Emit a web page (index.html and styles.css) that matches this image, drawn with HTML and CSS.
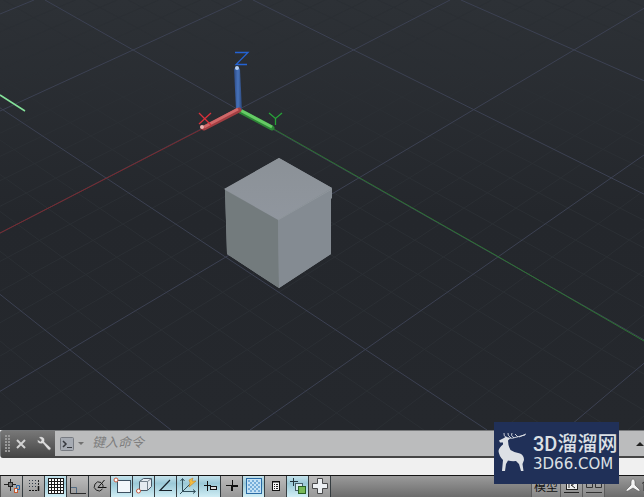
FILE: index.html
```html
<!DOCTYPE html>
<html lang="zh-CN">
<head>
<meta charset="utf-8">
<title>CAD</title>
<link rel="stylesheet" href="styles.css">
</head>
<body>
<div class="app">
  <main class="viewport">
    <svg class="scene" viewBox="0 0 644 430" preserveAspectRatio="xMinYMin slice" aria-hidden="true">
      <defs>
        <linearGradient id="bg" x1="0" y1="0" x2="0" y2="1"><stop offset="0" stop-color="#2d3136"/><stop offset=".5" stop-color="#24272c"/><stop offset="1" stop-color="#25282d"/></linearGradient>
        <linearGradient id="top" x1="0" y1="0" x2="0" y2="1"><stop offset="0" stop-color="#8b9197"/><stop offset="1" stop-color="#90969e"/></linearGradient>
        <linearGradient id="bluebar"><stop offset="0" stop-color="#2c4a86"/><stop offset=".5" stop-color="#4773bb"/><stop offset="1" stop-color="#2b4678"/></linearGradient>
      </defs>
      <rect width="644" height="430" fill="url(#bg)"/>
      <g id="grid"></g>
      <path d="M0 233L204 128" stroke="#7c292e" fill="none"/>
      <path d="M272 128L497 256L644 341" stroke="#2d7433" fill="none"/>
      <path d="M0 95L25 111" stroke="#85e29a" stroke-width="1.500" fill="none"/>
      <path d="M279 158L332 188L331 197V254L279 288L227 254L225 189Z" fill="#848b91"/>
      <path d="M224 189L279 158L332 188L278 220Z" fill="url(#top)"/>
      <path d="M225 190L278 220L279 288L227 254Z" fill="#737b7d"/>
      <path d="M278 220L332 189V198L331 199V254L279 288Z" fill="#848b92"/>
      <path d="M278 220L332 189" stroke="#8f969c" fill="none"/>
      <path d="M240 111L272 128" stroke="#2d8636" stroke-width="5" stroke-linecap="round"/>
      <path d="M240 110L272 127" stroke="#66cb65" stroke-width="3"/>
      <path d="M234 69q3-4 6 0L242 110H236Z" fill="url(#bluebar)"/>
      <circle cx="237" cy="68" r="2" fill="#b7d1f4"/>
      <path d="M239 110L204 128" stroke="#a23e42" stroke-width="5" stroke-linecap="round"/>
      <path d="M238 109L204 127" stroke="#cf6768" stroke-width="3"/>
      <circle cx="202" cy="127" r="2" fill="#efb4b2"/>
      <g fill="none">
        <path d="M199 113L211 125M211 113L199 124" stroke="#d8303a" stroke-width="1.300"/>
        <path d="M235 52.500H248L236 64.500H247" stroke="#2463d4" stroke-width="1.300"/>
        <path d="M269 113L275.500 118.500L282 113M275.500 118V125" stroke="#27a338" stroke-width="1.300"/>
      </g>
    </svg>
  </main>

  <form class="command">
    <div class="command-tools">
      <svg class="grip" viewBox="0 0 6 18" aria-hidden="true"><path d="M1 0V18M4 0V18" stroke="#999" stroke-width="2" stroke-dasharray="2 1"/></svg>
      <button class="tool" type="button" aria-label="关闭"><svg viewBox="0 0 14 16"><path d="M2 4L10 12M10 4L2 12" stroke="#d2d2d2" stroke-width="2"/></svg></button>
      <button class="tool wrench" type="button" aria-label="自定义"><svg viewBox="0 0 16 16"><path d="M1.500 1L4.500 4L3.500 5.500L.5 3.500Q-.5 6.500 2.500 7.500Q4.500 8 6 7.500L10.500 13Q12 15 13.500 13.500Q14.500 12.500 13 11L7.500 6Q8.500 1 4 .5Z" fill="#ddd" stroke="#555" stroke-width=".5"/></svg></button>
    </div>
    <button class="prompt" type="button" aria-label="最近使用的命令">
      <svg viewBox="0 0 26 16"><rect x="1.500" y="1.500" width="13" height="13" rx="1" fill="#a6abb3" stroke="#777b82"/><path d="M4 5L7 8L4 11" fill="none" stroke="#36393e" stroke-width="1.500"/><path d="M8 11.500H13" stroke="#36393e"/><path d="M19 6H25L22 9Z" fill="#707070"/></svg>
    </button>
    <input class="command-input" type="text" placeholder="键入命令" aria-label="命令">
    <button class="history" type="button" aria-label="历史记录"><svg viewBox="0 0 8 6"><path d="M0 5L4 1L8 5Z" fill="#222"/></svg></button>
  </form>
  <div class="gap"></div>

  <footer class="status">
    <div class="toggles">
      <button class="toggle" type="button" aria-label="推断约束"><svg viewBox="0 0 22 21"><path d="M3 8.500H15M9.500 3V15" stroke="#222"/><rect x="7.500" y="6.500" width="4" height="4" fill="#777" stroke="#222"/><rect x="13.500" y="12.500" width="3" height="4" fill="#eee" stroke="#c75b31"/><path d="M15.500 12V9.500H18.500V13.500H16" fill="none" stroke="#2463a8"/></svg></button>
      <button class="toggle" type="button" aria-label="捕捉模式"><svg viewBox="0 0 22 21"><path d="M6.500 4V13M9.500 4V13M12.500 4V13" stroke="#303a48" stroke-dasharray="1 2"/><path d="M15.500 4V11" stroke="#222" stroke-dasharray="2 1"/><path d="M6 14.500H14" stroke="#111" stroke-dasharray="2 1"/><path d="M15.500 10V15" stroke="#111" stroke-width="1.500"/></svg></button>
      <button class="toggle on" type="button" aria-label="栅格显示"><svg viewBox="0 0 22 21"><rect x="3.500" y="2.500" width="15" height="15" fill="#fff" stroke="#1c1c1c"/><path d="M6.500 3V17M9.500 3V17M12.500 3V17M15.500 3V17M4 5.500H18M4 8.500H18M4 11.500H18M4 14.500H18" stroke="#1c1c1c"/></svg></button>
      <button class="toggle" type="button" aria-label="正交模式"><svg viewBox="0 0 22 21"><path d="M3.500 2V17.500H19" fill="none" stroke="#292929"/><path d="M4 11.500H9.500V17" fill="none" stroke="#526b83"/></svg></button>
      <button class="toggle" type="button" aria-label="极轴追踪"><svg viewBox="0 0 22 21"><path d="M12 6.500A4.500 4.500 0 1 0 13.500 13" fill="none" stroke="#222"/><path d="M15.500 4L9 11.500H17.500" fill="none" stroke="#111"/><path d="M13 7.500Q14.500 9 14 12" fill="none" stroke="#222"/></svg></button>
      <button class="toggle on" type="button" aria-label="对象捕捉"><svg viewBox="0 0 22 21"><rect x="6.500" y="4.500" width="13" height="12" fill="#f2f7fb" stroke="#3d5060"/><circle cx="5" cy="4" r="2" fill="#fff" stroke="#c65a3e"/></svg></button>
      <button class="toggle on" type="button" aria-label="三维对象捕捉"><svg viewBox="0 0 22 21"><path d="M6.500 5.500L10.500 2.500H18.500V10.500L14.500 14.500H6.500Z" fill="#e4eaf0" stroke="#495866"/><path d="M6.500 5.500H14.500V14.500M14.500 5.500L18.500 2.500" fill="none" stroke="#75828d"/><circle cx="5.500" cy="15" r="2" fill="#fff" stroke="#c65a3e"/></svg></button>
      <button class="toggle on" type="button" aria-label="对象捕捉追踪"><svg viewBox="0 0 22 21"><path d="M15 4L5 14.500H17" fill="none" stroke="#18222a" stroke-width="1.200"/></svg></button>
      <button class="toggle on" type="button" aria-label="动态 UCS"><svg viewBox="0 0 22 21"><path d="M5.500 3V15.500H18M5.500 15.500L13 8M3.500 5L5.500 2.500L7.500 5M16 13.500L18.500 15.500L16 17.500M3 18L6 15" fill="none" stroke="#2f4d59"/><path d="M12 4L16 2L15 5L19 5L12 11L13 7Z" fill="#f4bd42" stroke="#b67520" stroke-width=".5"/></svg></button>
      <button class="toggle on" type="button" aria-label="动态输入"><svg viewBox="0 0 22 21"><path d="M5 9.500H12M8.500 5V15" stroke="#111"/><rect x="11.500" y="10.500" width="6" height="3" fill="#ddd" stroke="#111"/></svg></button>
      <button class="toggle" type="button" aria-label="线宽"><svg viewBox="0 0 22 21"><path d="M5 9.500H11" stroke="#111"/><path d="M11 10H17M11 9V15" stroke="#111" stroke-width="2"/><path d="M11.500 4V10" stroke="#111"/></svg></button>
      <button class="toggle on" type="button" aria-label="透明度"><svg viewBox="0 0 22 21"><rect x="3.500" y="2.500" width="15" height="15" fill="#c4e2f5" stroke="#296aa4"/><path d="M5 5H17M5 9H17M5 13H17" stroke="#78aeda" stroke-width="2" stroke-dasharray="2 2"/><path d="M7 7H17M7 11H17M7 15H17" stroke="#78aeda" stroke-width="2" stroke-dasharray="2 2"/></svg></button>
      <button class="toggle" type="button" aria-label="快捷特性"><svg viewBox="0 0 22 21"><rect x="7.500" y="5.500" width="7" height="9" fill="#f5f5f5" stroke="#111"/><path d="M8 6H14" stroke="#111"/><path d="M9 8.500H13M9 10.500H13M9 12.500H13" stroke="#222" stroke-dasharray="1 1 2 1"/></svg></button>
      <button class="toggle on" type="button" aria-label="选择循环"><svg viewBox="0 0 22 21"><path d="M3 5.500H11M6.500 2V10" stroke="#22323a"/><rect x="8.500" y="7.500" width="7" height="7" fill="#d8e9ef" stroke="#455e69"/><rect x="11.500" y="10.500" width="7" height="7" fill="#78b957" stroke="#275f24"/></svg></button>
      <button class="toggle" type="button" aria-label="注释监视器"><svg viewBox="0 0 22 21"><path d="M8.500 2.500H13.500V7.500H18.500V12.500H13.500V17.500H8.500V12.500H3.500V7.500H8.500Z" fill="#edf0f3" stroke="#48494b"/></svg></button>
    </div>
    <div class="spaces">
      <button class="space model" type="button">模型</button>
      <button class="space" type="button" aria-label="快速查看布局"><svg viewBox="0 0 22 21"><rect x="5.500" y="2.500" width="11" height="11" fill="#eee" stroke="#222"/><path d="M8 5V12M8 6.500H12V9H10L14 12" fill="none" stroke="#222"/><path d="M3 16.500H18" stroke="#222"/></svg></button>
      <button class="space" type="button" aria-label="快速查看图形"><svg viewBox="0 0 22 21"><path d="M3.500 5V11.500H9.500V5M12.500 5V11.500H18.500V5M3 16.500H19" fill="none" stroke="#333"/></svg></button>
    </div>
    <button class="annotation" type="button" aria-label="注释比例"><svg viewBox="0 0 22 21"><path d="M7 3Q9 3 9 6V9L14 14Q14 16 12 15L7 12L2 15Q0 16 0 14L5 9V6Q5 3 7 3Z" fill="#f4f4f4" stroke="#444" stroke-width=".5"/><path d="M16 7.500L18 6V15" stroke="#333" fill="none"/></svg></button>
  </footer>

  <aside class="watermark">
    <svg class="deer" viewBox="0 0 30 40" aria-hidden="true">
      <path d="M2 7.500L7 5L9 3.500L13 5.500L11 7.500Q11 13 13.500 17Q17 19.500 23 20.500Q27 22 27 27L25.500 31L26.500 38H24L22 31L19 28Q15 28.500 11 27.500L9 31L8 38H5L6 27Q2 23 1.500 18Q2 14.500 6 11.500V9.500L3 9.500Z" fill="#dce0e5"/>
      <path d="M10 5Q6 3 7 0M11 5Q15 6 20 4L28 2M14 5Q10 2 11 0M17 5Q13 2 15 0M21 4L18 1M22 4L29 1" fill="none" stroke="#dce0e5" stroke-width=".9"/>
    </svg>
    <div class="brand">
      <strong class="brand-name">3D溜溜网</strong>
      <span class="brand-site">3D66.COM</span>
    </div>
  </aside>
</div>
<script src="grid.js"></script>
</body>
</html>
```
FILE: styles.css
```css
* {
  box-sizing: border-box;
}

body {
  margin: 0;
  font-family: "Liberation Sans", "Noto Sans CJK SC", sans-serif;
}

button {
  margin: 0;
  padding: 0;
  border: 0;
  background: none;
  font: inherit;
}

svg {
  display: block;
}

.app {
  position: relative;
  display: flex;
  flex-direction: column;
  height: 100vh;
  overflow: hidden;
}

.viewport {
  flex: 1;
  min-height: 0;
  background: #25282d;
}

.scene {
  width: 100%;
  height: 100%;
}

.command {
  display: flex;
  align-items: stretch;
  height: 28px;
  border: 1px solid #77797b;
  border-right: 0;
  border-bottom: 2px solid #454545;
  border-radius: 3px 0 0 3px;
  background: #bbbcbd;
}

.command-tools {
  display: flex;
  align-items: center;
  gap: 4px;
  width: 54px;
  padding-left: 4px;
  background: linear-gradient(#777, #484848);
}

.grip {
  width: 6px;
  height: 18px;
}

.tool svg {
  width: 14px;
  height: 16px;
}

.wrench {
  margin-left: 4px;
}

.wrench svg {
  width: 16px;
}

.prompt {
  padding: 0 4px;
}

.prompt svg {
  width: 26px;
  height: 16px;
}

.command-input {
  flex: 1;
  min-width: 0;
  padding: 0 3px 2px;
  border: 0;
  outline: 0;
  background: none;
  font: italic 13px "Liberation Sans", "Noto Sans CJK SC", sans-serif;
}

.command-input::placeholder {
  color: #7e7e7e;
  opacity: 1;
}

.history svg {
  width: 8px;
  height: 6px;
}

.gap {
  height: 17px;
  background: #f0f0f0;
}

.status {
  display: flex;
  height: 22px;
  border-top: 1px solid #151515;
  background: linear-gradient(#9a9a9a, #6c6c6c);
}

.toggles {
  display: flex;
  padding-left: 1px;
  background: #555;
}

.toggle {
  width: 22px;
  border-right: 1px solid #353c40;
  background: linear-gradient(#bcbcbc, #979797);
}

.toggle.on {
  background: linear-gradient(#c5e2eb, #9bc9d7 35%, #d0edf4);
}

.toggle svg,
.space svg,
.annotation svg {
  width: 22px;
  height: 21px;
}

.spaces {
  display: flex;
  margin-left: auto;
}

.space {
  width: 22px;
  overflow: hidden;
  border: solid #5c5c5c;
  border-width: 0 1px 0 0;
  background: linear-gradient(#b5b5b5, #858585);
}

.space.model {
  width: 30px;
  border-left-width: 1px;
  color: #111;
  font-size: 12px;
  line-height: 20px;
}

.annotation {
  width: 18px;
  margin-left: 21px;
  overflow: hidden;
}

.watermark {
  position: absolute;
  right: 25px;
  bottom: 13px;
  display: flex;
  align-items: center;
  gap: 6px;
  height: 62px;
  width: 125px;
  padding-left: 3px;
  background: #203058;
}

.deer {
  flex: none;
  width: 30px;
  height: 40px;
}

.brand {
  display: flex;
  flex-direction: column;
  color: #dce0e5;
  white-space: nowrap;
}

.brand-name {
  font: 500 20px/22px Roboto, "Noto Sans CJK SC", sans-serif;
}

.brand-site {
  font: 15px/18px "DejaVu Sans", sans-serif;
}
```
FILE: grid.js
```js
// Perspective ground grid: lines of each family are evenly spaced
// along the top and bottom edges. Every fifth line is a major one.
const grid = document.getElementById("grid");
const families = [
  { top: 45, bottom: 803, topStep: 208, bottomStep: 316 },
  { top: 450, bottom: -380, topStep: 208, bottomStep: 315 },
];

function drawLines(major) {
  for (const f of families) {
    for (let i = -30; i <= 30; i++) {
      if ((i % 5 === 0) !== major) continue;
      const line = document.createElementNS("http://www.w3.org/2000/svg", "line");
      line.setAttribute("x1", f.top + (f.topStep * i) / 5);
      line.setAttribute("y1", 0);
      line.setAttribute("x2", f.bottom + (f.bottomStep * i) / 5);
      line.setAttribute("y2", 430);
      line.setAttribute("stroke", major ? "#3c4152" : "#2b2f34");
      grid.append(line);
    }
  }
}

drawLines(false);
drawLines(true);
```
